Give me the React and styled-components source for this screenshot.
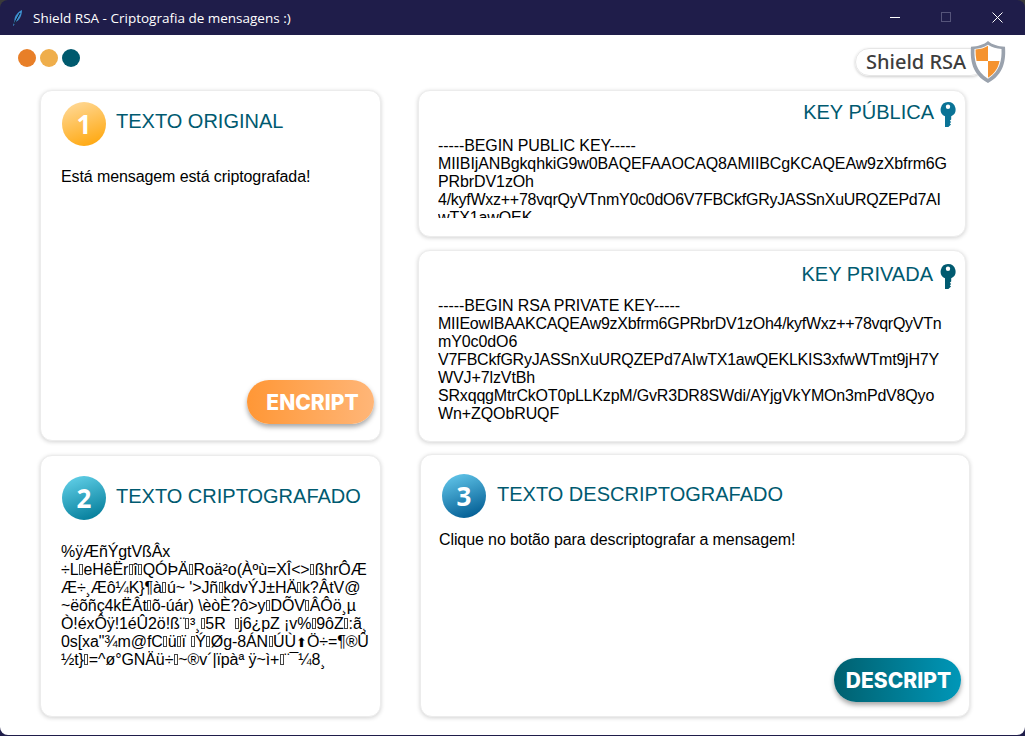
import { createGlobalStyle, styled } from 'styled-components'

const GlobalStyle = createGlobalStyle`
  html, body {
    margin: 0;
    padding: 0;
    background: #3a3a3a;
  }
  * {
    box-sizing: border-box;
  }
`

const StyledWindow = styled.div`
  width: 1025px;
  height: 736px;
  background: #1f1d4a;
  border-radius: 8px 8px 0 0;
  overflow: hidden;
  display: flex;
  flex-direction: column;
`

const StyledTitleBar = styled.div`
  height: 35px;
  flex: none;
  display: flex;
  align-items: center;
  padding: 0 2px 0 12px;
  color: #fff;
  font-family: 'Open Sans', sans-serif;
  font-size: 13.5px;
`

const StyledWindowTitle = styled.span`
  margin-left: 10px;
  flex: 1;
`

const StyledControl = styled.div`
  width: 51px;
  height: 35px;
  display: flex;
  align-items: center;
  justify-content: center;
`

const StyledBody = styled.div`
  height: 700px;
  flex: none;
  background: #fff;
  border-radius: 0 0 8px 8px;
`

const StyledTopBar = styled.div`
  height: 55px;
  display: flex;
  justify-content: space-between;
  padding: 14px 40px 0 18px;
`

const StyledDots = styled.div`
  display: flex;
  gap: 4px;
`

const StyledDot = styled.div`
  width: 18px;
  height: 18px;
  border-radius: 50%;
  background: ${(p) => p.color};
`

const StyledLogo = styled.div`
  position: relative;
  width: 130px;
  height: 28px;
  margin-top: -1px;
  border: 1px solid #e6e6e6;
  border-radius: 14px;
  box-shadow: 0 1px 3px rgba(0, 0, 0, 0.2);
  padding-left: 10px;
  color: #3d3d3d;
  font-family: 'Noto Sans', sans-serif;
  font-weight: 500;
  font-size: 20px;
  line-height: 26px;
  white-space: nowrap;
`

const StyledShield = styled.svg`
  position: absolute;
  right: -22px;
  top: -8px;
`

const StyledColumns = styled.div`
  display: flex;
  padding-left: 40px;
`

const StyledLeft = styled.div`
  width: 341px;
  display: flex;
  flex-direction: column;
  gap: 14px;
`

const StyledRight = styled.div`
  width: 552px;
  margin-left: 37px;
  display: flex;
  flex-direction: column;
`

const StyledCard = styled.div`
  background: #fff;
  border: 1px solid #ececec;
  border-radius: 12px;
  box-shadow: 0 1px 4px rgba(0, 0, 0, 0.18);
  display: flex;
  flex-direction: column;
  font-family: 'Liberation Sans', Arial, sans-serif;
  height: ${(p) => p.$h}px;
`

const StyledKeyCard = styled(StyledCard)`
  width: 548px;
  margin-bottom: ${(p) => p.$mb}px;
  padding: ${(p) => p.$pt}px 9px 0 19px;
`

const StyledResultCard = styled(StyledCard)`
  width: 550px;
  margin-left: 2px;
`

const StyledHeader = styled.div`
  display: flex;
  align-items: center;
  gap: ${(p) => p.$gap || 10}px;
  margin: ${(p) => p.$m};
`

const StyledBadge = styled.div`
  width: 44px;
  height: 44px;
  border-radius: 50%;
  flex: none;
  display: flex;
  align-items: center;
  justify-content: center;
  color: #fff;
  font-family: 'Open Sans', sans-serif;
  font-weight: 700;
  font-size: 26px;
  background: ${(p) => p.$bg};
`

const StyledTitle = styled.div`
  color: #005a70;
  font-size: 20px;
  line-height: 23px;
  margin-top: ${(p) => p.$mt || 0}px;
  white-space: nowrap;
`

const StyledKeyHeader = styled.div`
  display: flex;
  justify-content: flex-end;
  align-items: flex-start;
  gap: ${(p) => p.$gap}px;
  height: 29px;
`

const StyledMessage = styled.div`
  color: #000;
  font-size: 16px;
  line-height: 18px;
  letter-spacing: -0.1px;
  white-space: pre;
  margin: ${(p) => p.$m};
`

const StyledKeyText = styled(StyledMessage)`
  overflow: hidden;
  height: ${(p) => p.$h}px;
`

const StyledKeyLine = styled.div`
  letter-spacing: ${(p) => p.$ls}px;
`

// caractere de controle sem glifo: no print aparece como caixinha
const StyledTofu = styled.span`
  display: inline-block;
  width: 4px;
  height: 11px;
  margin: 0 0.5px;
  border: 1px solid #444;
`

const StyledArrow = styled.span`
  font-size: 13px;
  line-height: 1;
`

const StyledButton = styled.button`
  width: 127px;
  height: 44px;
  border: none;
  border-radius: 22px;
  margin: auto ${(p) => p.$mr}px ${(p) => p.$mb}px auto;
  padding: 0 0 0 ${(p) => p.$pl}px;
  color: #fff;
  font-family: 'Inter', sans-serif;
  font-weight: 800;
  font-size: 21px;
  background: ${(p) => p.$bg};
  box-shadow: 0 3px 5px rgba(0, 0, 0, 0.35);
`

function Key({ color }) {
  return (
    <svg width="16" height="27" viewBox="0 0 16 27">
      <path
        fill={color}
        fillRule="evenodd"
        d="M8 1a7.500 7.500 0 0 1 3.200 14.300V18.500l-1.400 1.200 1.400 1.300-1.400 1.200 1.200 1.300-2.600 2.500H5V15.300A7.500 7.500 0 0 1 8 1zm0 2.500a2.200 2.200 0 1 0 0 4.400A2.200 2.200 0 0 0 8 3.500z"
      />
    </svg>
  )
}

function Garbled({ text }) {
  return text.split(/([▯⬆])/).map((part, i) => {
    if (part === '▯') return <StyledTofu key={i} />
    if (part === '⬆') return <StyledArrow key={i}>{part}</StyledArrow>
    return part
  })
}

const encrypted = [
  '%ÿÆñÝgtVßÂx',
  '÷L▯eHêËr▯î▯QÓÞÄ▯Roä²o(Àºù=XÎ<>▯ßhrÔÆ',
  "Æ÷¸Æô¼K}¶à▯ú~ '>Jñ▯kdvÝJ±HÄ▯k?ÂtV@",
  '~ëõñç4kËÂt▯õ-úár) \\èòÈ?ô>y▯DÕV▯ÂÔö¸µ',
  'Ò!éxÔÿ!1éÛ2ö!ß¨▯³¸▯5R  ▯j6¿pZ ¡v%▯9ôZ▯:ã¸',
  '0s[xa"¾m@fC▯ü▯ï ▯Ý▯Øg-8ÁN▯ÚÙ⬆Ö÷=¶®Û',
  '½t}▯=^ø°GNÄü÷▯~®v´|ïpàª ÿ~ì+▯¨¯¼8¸',
].join('\n')

// linhas com espacamento proprio pra cair na mesma largura do print
const publicKey = [
  ['-----BEGIN PUBLIC KEY-----', -0.1],
  ['MIIBIjANBgkqhkiG9w0BAQEFAAOCAQ8AMIIBCgKCAQEAw9zXbfrm6G', -0.12],
  ['PRbrDV1zOh', -0.1],
  ['4/kyfWxz++78vqrQyVTnmY0c0dO6V7FBCkfGRyJASSnXuURQZEPd7AI', -0.27],
  ['wTX1awQEK', -0.1],
]

const privateKey = [
  ['-----BEGIN RSA PRIVATE KEY-----', -0.1],
  ['MIIEowIBAAKCAQEAw9zXbfrm6GPRbrDV1zOh4/kyfWxz++78vqrQyVTn', -0.28],
  ['mY0c0dO6', -0.1],
  ['V7FBCkfGRyJASSnXuURQZEPd7AIwTX1awQEKLKIS3xfwWTmt9jH7Y', -0.23],
  ['WVJ+7lzVtBh', -0.1],
  ['SRxqqgMtrCkOT0pLLKzpM/GvR3DR8SWdi/AYjgVkYMOn3mPdV8Qyo', -0.18],
  ['Wn+ZQObRUQF', -0.1],
]

function KeyLines({ lines }) {
  return lines.map(([line, spacing]) => (
    <StyledKeyLine key={line} $ls={spacing}>
      {line}
    </StyledKeyLine>
  ))
}

export default function App() {
  return (
    <StyledWindow>
      <GlobalStyle />
      <StyledTitleBar>
        <svg width="11" height="16" viewBox="0 0 11 16">
          <path fill="#3d8fd0" d="M10 0C6 2 2 6 2.500 11L1 15.500l.8.3L3.400 12C8 10.500 10 5 10 0z" />
          <path stroke="#10131f" fill="none" d="M8 3 2 14" />
        </svg>
        <StyledWindowTitle>Shield RSA - Criptografia de mensagens :)</StyledWindowTitle>
        <StyledControl>
          <svg width="11" height="11"><path stroke="#fff" d="M0 5.500h10" /></svg>
        </StyledControl>
        <StyledControl>
          <svg width="11" height="11"><rect x=".5" y=".5" width="9" height="9" fill="none" stroke="#55547a" /></svg>
        </StyledControl>
        <StyledControl>
          <svg width="11" height="11"><path stroke="#fff" d="M.5.5l10 10M10.500.5l-10 10" /></svg>
        </StyledControl>
      </StyledTitleBar>
      <StyledBody>
        <StyledTopBar>
          <StyledDots>
            <StyledDot color="#e87f28" />
            <StyledDot color="#efae4b" />
            <StyledDot color="#005a6e" />
          </StyledDots>
          <StyledLogo>
            Shield RSA
            <StyledShield width="36" height="42" viewBox="0 0 36 44" preserveAspectRatio="none">
              <path fill="#9aa2ad" d="M18 0c4 4 10 5.500 17 6 1 14-1 29-17 38C2 35 0 20 1 6c7-.5 13-2 17-6z" />
              <path fill="#fff" d="M18 4c4 3 8.500 4 13.500 4.500C32 20 30 32 18 39.500 6 32 4 20 4.500 8.500 9.500 8 14 7 18 4z" />
              <path fill="#f5932f" d="M18 5c-3.500 2.500-8 3.500-12.500 4 0 4 .2 8 1 12H18zM18 21v17.500c7-4.500 10.500-11 11.500-17.500z" />
            </StyledShield>
          </StyledLogo>
        </StyledTopBar>
        <StyledColumns>
          <StyledLeft>
            <StyledCard $h={351}>
              <StyledHeader $m="11px 0 0 21px">
                <StyledBadge $bg="linear-gradient(160deg, #ffd998 5%, #ffa912 90%)">1</StyledBadge>
                <StyledTitle $mt={-5}>TEXTO ORIGINAL</StyledTitle>
              </StyledHeader>
              <StyledMessage $m="22px 0 0 20px">Está mensagem está criptografada!</StyledMessage>
              <StyledButton $mr={6} $mb={16} $pl={4} $bg="linear-gradient(90deg, #ff9736, #ffb678)">
                ENCRIPT
              </StyledButton>
            </StyledCard>
            <StyledCard $h={262}>
              <StyledHeader $m="20px 0 0 21px">
                <StyledBadge $bg="linear-gradient(160deg, #62d0e8 5%, #067f9c 90%)">2</StyledBadge>
                <StyledTitle $mt={-3}>TEXTO CRIPTOGRAFADO</StyledTitle>
              </StyledHeader>
              <StyledMessage $m="23px 0 0 20px">
                <Garbled text={encrypted} />
              </StyledMessage>
            </StyledCard>
          </StyledLeft>
          <StyledRight>
            <StyledKeyCard $h={147} $mb={13} $pt={10}>
              <StyledKeyHeader $gap={6}>
                <StyledTitle>KEY PÚBLICA</StyledTitle>
                <Key color="#0a7396" />
              </StyledKeyHeader>
              <StyledKeyText $h={81} $m="7px 0 0 0">
                <KeyLines lines={publicKey} />
              </StyledKeyText>
            </StyledKeyCard>
            <StyledKeyCard $h={192} $mb={12} $pt={12}>
              <StyledKeyHeader $gap={7}>
                <StyledTitle>KEY PRIVADA</StyledTitle>
                <Key color="#005a70" />
              </StyledKeyHeader>
              <StyledKeyText $h={126} $m="5px 0 0 0">
                <KeyLines lines={privateKey} />
              </StyledKeyText>
            </StyledKeyCard>
            <StyledResultCard $h={263}>
              <StyledHeader $m="19px 0 0 21px" $gap={11}>
                <StyledBadge $bg="linear-gradient(160deg, #62c6ea 5%, #045f95 90%)">3</StyledBadge>
                <StyledTitle $mt={-3}>TEXTO DESCRIPTOGRAFADO</StyledTitle>
              </StyledHeader>
              <StyledMessage $m="13px 0 0 18px">Clique no botão para descriptografar a mensagem!</StyledMessage>
              <StyledButton $mr={8} $mb={14} $pl={2} $bg="linear-gradient(90deg, #00606f, #0097b8)">
                DESCRIPT
              </StyledButton>
            </StyledResultCard>
          </StyledRight>
        </StyledColumns>
      </StyledBody>
    </StyledWindow>
  )
}
